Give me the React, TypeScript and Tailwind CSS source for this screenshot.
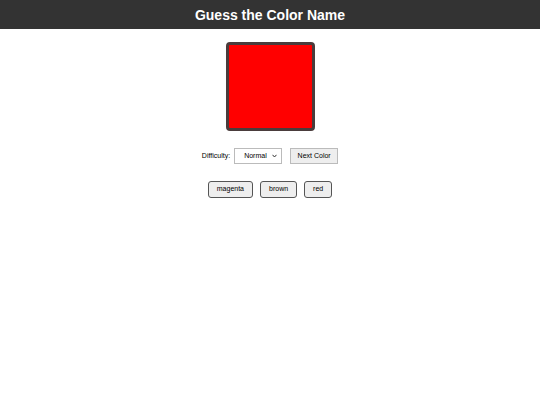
import { useState } from "react";

const NAMES = ["magenta", "brown", "red"];

export default function App() {
  const [difficulty, setDifficulty] = useState("normal");

  return (
    <div className="min-h-[405px] bg-white" style={{ fontFamily: '"Liberation Sans", Arial, sans-serif' }}>
      <header className="h-[29px] bg-[#333333] flex items-center justify-center">
        <h1 className="text-[14px] font-bold text-white leading-none">Guess the Color Name</h1>
      </header>

      <main className="flex flex-col items-center">
        <div className="mt-[13px] w-[89px] h-[89px] rounded-[4px] border-[3px] border-[#4a3c3c] bg-[#ff0000]" />

        <div className="mt-[17px] flex items-center text-[7px] text-black">
          <span>Difficulty:</span>
          <div className="relative ml-[4px]">
            <select
              value={difficulty}
              onChange={(e) => setDifficulty(e.target.value)}
              className="appearance-none w-[48px] h-[16px] border border-[#bbbbbb] bg-white text-[7px] text-black pl-[9px] pr-[10px]"
            >
              <option value="easy">Easy</option>
              <option value="normal">Normal</option>
              <option value="hard">Hard</option>
            </select>
            <svg
              className="pointer-events-none absolute right-[5px] top-[6px]"
              width="5"
              height="4"
              viewBox="0 0 5 4"
              fill="none"
              stroke="#333"
              strokeWidth="1"
            >
              <path d="M0.5 0.8 L2.5 3 L4.5 0.8" />
            </svg>
          </div>
          <button className="ml-[8px] w-[48px] h-[16px] border border-[#bbbbbb] bg-[#eeeeee] text-[7px] text-black">
            Next Color
          </button>
        </div>

        <div className="mt-[17px] flex gap-[7px]">
          {NAMES.map((n) => (
            <button
              key={n}
              className="h-[17px] px-[8px] rounded-[3px] border border-[#555555] bg-[#eeeeee] text-[7px] text-black"
            >
              {n}
            </button>
          ))}
        </div>
      </main>
    </div>
  );
}
